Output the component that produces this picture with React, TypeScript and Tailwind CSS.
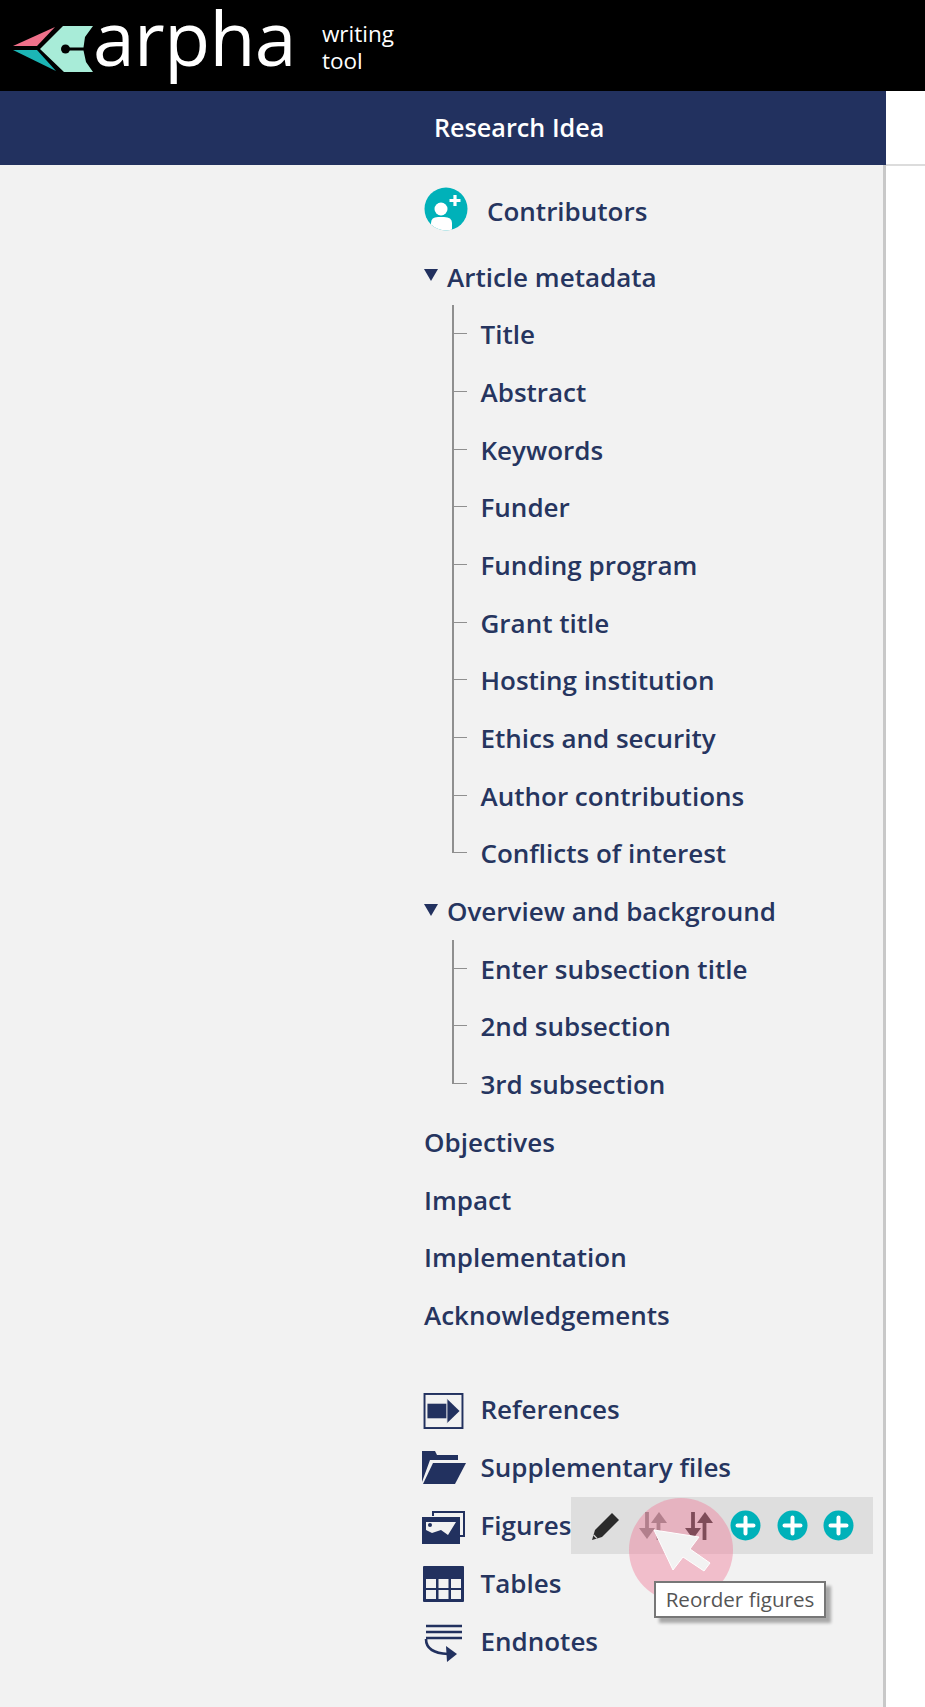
import React from 'react';

const metadata = [
  'Title',
  'Abstract',
  'Keywords',
  'Funder',
  'Funding program',
  'Grant title',
  'Hosting institution',
  'Ethics and security',
  'Author contributions',
  'Conflicts of interest',
];

const overview = ['Enter subsection title', '2nd subsection', '3rd subsection'];
const plain = ['Objectives', 'Impact', 'Implementation', 'Acknowledgements'];

function Logo() {
  return (
    <svg width="96" height="60" viewBox="0 0 96 60" className="shrink-0">
      <polygon points="13,26 55,7 37,26" fill="#f0708a" />
      <polygon points="13,30 37,30 56,51" fill="#1cb5b5" />
      <path d="M93 6 H63 L40 29 L64 52 H93 L86 42 L83.5 30.5 H66 V27.5 H83.5 L85 17 Z" fill="#a8ecd8" />
      <circle cx="65.5" cy="29" r="4.5" fill="#000" />
    </svg>
  );
}

function Caret() {
  return (
    <svg width="14" height="12" viewBox="0 0 14 12" className="-mt-[3px] shrink-0">
      <polygon points="0,0 14,0 7,12" fill="#22315f" />
    </svg>
  );
}

function TreeRow({ label, last }: { label: string; last?: boolean }) {
  return (
    <div className="flex h-[57.7px] items-stretch">
      <div className="flex w-[29px] flex-col pl-[28px]">
        <div className="h-1/2 w-[15px] border-b-[1.5px] border-l-2 border-[#8f8f8f]" />
        {!last && <div className="h-1/2 w-[15px] border-l-2 border-[#8f8f8f]" />}
      </div>
      <div className="ml-[27.5px] flex items-center">{label}</div>
    </div>
  );
}

function IconRow({ icon, label }: { icon: React.ReactNode; label: string }) {
  return (
    <div className="flex h-[58px] items-center">
      <div className="flex w-[56.5px] shrink-0 justify-start">{icon}</div>
      {label}
    </div>
  );
}

function PlusCircle() {
  return (
    <svg width="31" height="31" viewBox="0 0 31 31">
      <circle cx="15.5" cy="15.5" r="15" fill="#00b1b9" />
      <path d="M15.5 7.5 V23.5 M7.5 15.5 H23.5" stroke="#fff" strokeWidth="4" strokeLinecap="round" />
    </svg>
  );
}

function SortArrows({ faded }: { faded?: boolean }) {
  return (
    <svg width="28" height="30" viewBox="0 0 28 30" className={faded ? 'opacity-50' : ''}>
      <path d="M8 1 V20 M19.5 10 V29" stroke="#2e2e2e" strokeWidth="3.8" />
      <polygon points="0,17 16,17 8,28" fill="#2e2e2e" />
      <polygon points="12,12 28,12 20,1" fill="#2e2e2e" />
    </svg>
  );
}

export default function App() {
  return (
    <div className="relative h-[1707px] w-[925px] overflow-hidden bg-white text-[26px] font-semibold leading-none text-[#26355f] [font-family:'Open_Sans',sans-serif]">
      <header className="flex h-[91px] bg-black text-white">
        <div className="pt-[20px]">
          <Logo />
        </div>
        <div className="-mt-[2px] ml-[-3px] text-[75px] leading-[78px] font-normal tracking-[-0.6px]">arpha</div>
        <div className="ml-[26px] pt-[20px] text-[22.5px] leading-[27px] font-normal">
          <div>writing</div>
          <div>tool</div>
        </div>
      </header>

      <div className="flex h-[1616px]">
        <div className="flex w-[886px] flex-col">
          <div className="flex h-[74px] shrink-0 items-center bg-[#22315f] pl-[434px] text-[25.2px] text-white">
            Research Idea
          </div>

          <div className="flex-1 border-r-[3px] border-[#c8c8c8] bg-[#f2f2f2] pl-[424px] pt-[17px]">
            <div className="mb-[8px] flex h-[57.67px] items-center">
              <svg width="44" height="44" viewBox="0 0 44 44" className="-mt-[4px] shrink-0">
                <defs>
                  <clipPath id="contrib">
                    <circle cx="22" cy="22" r="21.5" />
                  </clipPath>
                </defs>
                <circle cx="22" cy="22" r="21.5" fill="#00b1b9" />
                <g clipPath="url(#contrib)" fill="#fff">
                  <circle cx="17" cy="22" r="6.5" />
                  <path d="M7 44 V36 Q7 30 14 30 H20 Q28 30 28 36 V44 Z" />
                </g>
                <path d="M31 8 V19 M25.5 13.5 H36.5" stroke="#fff" strokeWidth="3.2" />
              </svg>
              <span className="ml-[19px]">Contributors</span>
            </div>

            <div className="flex h-[57.7px] items-center gap-[9px]">
              <Caret />
              Article metadata
            </div>
            {metadata.map((item, i) => (
              <TreeRow key={item} label={item} last={i === metadata.length - 1} />
            ))}

            <div className="flex h-[57.7px] items-center gap-[9px]">
              <Caret />
              Overview and background
            </div>
            {overview.map((item, i) => (
              <TreeRow key={item} label={item} last={i === overview.length - 1} />
            ))}

            {plain.map((item) => (
              <div key={item} className="flex h-[57.7px] items-center">
                {item}
              </div>
            ))}

            <div className="mt-[36px]">
              <IconRow
                label="References"
                icon={
                  <svg width="41" height="36" viewBox="0 0 41 37" className="-ml-[1px] mt-[5px]">
                    <rect x="1" y="1" width="39" height="35" fill="none" stroke="#22315f" strokeWidth="2" />
                    <rect x="4" y="11" width="20" height="15" fill="#22315f" />
                    <polygon points="24,6 37,18.5 24,31" fill="#22315f" />
                    <path d="M24 6 V31" stroke="#f2f2f2" strokeWidth="1" />
                  </svg>
                }
              />
              <IconRow
                label="Supplementary files"
                icon={
                  <svg width="45" height="35" viewBox="0 0 45 35" className="-ml-[3px] mt-[2px]">
                    <path d="M1 32 V1 H14 L16 5 H37 V10 H9 Z" fill="#22315f" />
                    <polygon points="12,13 45,13 34,34 2,34" fill="#22315f" />
                  </svg>
                }
              />
              <IconRow
                label="Figures"
                icon={
                  <svg width="45" height="34" viewBox="0 0 45 34" className="-ml-[3px] mt-[5px]">
                    <path d="M11 1 H44 V27 H39 V25 H42 V3 H13 V6 H11 Z" fill="#22315f" />
                    <rect x="1" y="7" width="38" height="27" fill="#22315f" />
                    <polygon points="5,12 35,12 27,25 20,20 11,23 5,20" fill="#f2f2f2" />
                    <circle cx="9" cy="15" r="2" fill="#22315f" />
                  </svg>
                }
              />
              <IconRow
                label="Tables"
                icon={
                  <svg width="41" height="36" viewBox="0 0 41 36" className="-ml-[1px] mt-[2px]">
                    <rect x="0" y="0" width="41" height="36" rx="1" fill="#22315f" />
                    <g fill="#f2f2f2">
                      <rect x="3" y="13" width="10" height="9" />
                      <rect x="15.5" y="13" width="10" height="9" />
                      <rect x="28" y="13" width="10" height="9" />
                      <rect x="3" y="24" width="10" height="9" />
                      <rect x="15.5" y="24" width="10" height="9" />
                      <rect x="28" y="24" width="10" height="9" />
                    </g>
                  </svg>
                }
              />
              <IconRow
                label="Endnotes"
                icon={
                  <svg width="40" height="39" viewBox="0 0 40 39" className="mt-[5px]">
                    <path d="M2 2 H38 M2 8 H38 M2 14 H38" stroke="#22315f" strokeWidth="2.4" fill="none" />
                    <path d="M2 15 Q2 29 24 30" stroke="#22315f" strokeWidth="2.6" fill="none" />
                    <polygon points="22,22 33,30 23,38" fill="#22315f" />
                  </svg>
                }
              />
            </div>
          </div>
        </div>
        <div className="h-[75px] flex-1 border-b-[2px] border-[#dcdcdc]" />
      </div>

      {/* hover toolbar on the Figures row */}
      <div className="absolute left-[571px] top-[1497px] flex h-[57px] w-[302px] items-center bg-[#dedede] pl-[12px]">
        <div className="flex w-[46.5px] justify-center">
          <svg width="32" height="32" viewBox="0 0 32 32">
            <path d="M2 30 L5 20 L22 3 L29 10 L12 27 Z" fill="#2b2b2b" />
            <path d="M23.5 1.5 L30.5 8.5" stroke="#dedede" strokeWidth="1.4" />
            <path d="M3.6 25 L7 28.4" stroke="#dedede" strokeWidth="1.2" />
          </svg>
        </div>
        <div className="flex w-[46.5px] justify-center">
          <SortArrows faded />
        </div>
        <div className="flex w-[46.5px] justify-center">
          <SortArrows />
        </div>
        <div className="flex w-[46.5px] justify-center">
          <PlusCircle />
        </div>
        <div className="flex w-[46.5px] justify-center">
          <PlusCircle />
        </div>
        <div className="flex w-[46.5px] justify-center">
          <PlusCircle />
        </div>
      </div>

      {/* recording cursor highlight */}
      <div className="absolute left-[629px] top-[1498px] h-[104px] w-[104px] rounded-full bg-[rgba(240,120,150,0.42)]" />
      <svg width="60" height="44" viewBox="0 0 60 44" className="absolute left-[652px] top-[1528px]">
        <polygon points="2,2 47,9 38,21 58,35 52,43 31,29 21,42" fill="#f2f2f2" stroke="#fff" strokeWidth="1" />
      </svg>

      <div className="absolute left-[654px] top-[1581px] flex h-[37px] w-[172px] items-center justify-center border-2 border-[#777] bg-white text-[20.6px] font-normal text-[#555] shadow-[5px_5px_3px_rgba(0,0,0,0.3)]">
        Reorder figures
      </div>
    </div>
  );
}
